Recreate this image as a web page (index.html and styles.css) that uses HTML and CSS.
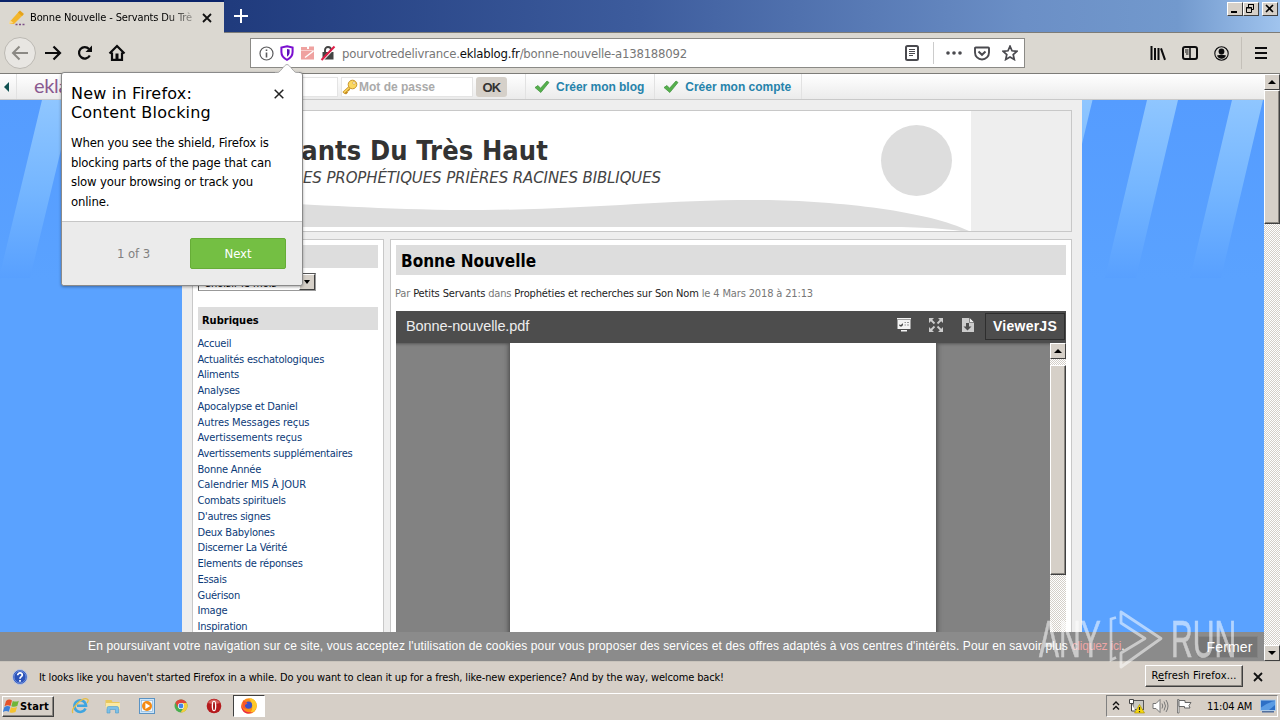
FILE: index.html
```html
<!DOCTYPE html>
<html lang="fr">
<head>
<meta charset="utf-8">
<title>Bonne Nouvelle - Servants Du Très Haut</title>
<link rel="stylesheet" href="styles.css">
</head>
<body>
<div class="screen">
  <header class="titlebar">
    <div class="tab">
      <svg class="tab-icon" width="18" height="18" viewBox="0 0 18 18"><path d="M2 12.500L11 2.500l4 3.500L6 15H2z" fill="#f3b62c"/><path d="M10 3.500l2-2 4 3.500-2 2z" fill="#e5a31c"/><path d="M1 15l1-4 3.500 3z" fill="#f9d98c"/><path d="M7.500 15.500h2M11 15.500h2M14.500 15.500h2" stroke="#7b4d86" stroke-width="1.600"/></svg>
      <span class="tab-text">Bonne Nouvelle - Servants Du Trè</span>
      <svg class="tab-close" width="10" height="10" viewBox="0 0 10 10"><path d="M1 1l8 8M9 1L1 9" stroke="#111" stroke-width="1.800"/></svg>
    </div>
    <svg class="plus" width="14" height="14" viewBox="0 0 14 14"><path d="M7 0v14M0 7h14" stroke="#fff" stroke-width="2"/></svg>
    <div class="win-buttons">
      <span class="wbtn"><svg width="13" height="11" viewBox="0 0 13 11"><path d="M3 9h6" stroke="#000" stroke-width="2"/></svg></span>
      <span class="wbtn"><svg width="13" height="11" viewBox="0 0 13 11"><path d="M4.500 4V1.500h5v5H8M4 1.500h6M2.500 4.500h5v5h-5zM2 5h6" fill="none" stroke="#000"/></svg></span>
      <span class="wbtn gap"><svg width="13" height="11" viewBox="0 0 13 11"><path d="M3 2l7 7M10 2L3 9" stroke="#000" stroke-width="1.600"/></svg></span>
    </div>
  </header>

  <nav class="navbar">
    <span class="back"><svg width="18" height="16" viewBox="0 0 18 16"><path d="M17 8H2M8.500 1.500L2 8l6.500 6.500" fill="none" stroke="#8b8984" stroke-width="2"/></svg></span>
    <svg class="fwd" width="18" height="16" viewBox="0 0 18 16"><path d="M1 8h15M9.500 1.500L16 8l-6.500 6.500" fill="none" stroke="#0c0c0d" stroke-width="2.200"/></svg>
    <svg class="reload" width="16" height="16" viewBox="0 0 16 16"><path d="M12.800 10.500A5.700 5.700 0 1 1 12 4" fill="none" stroke="#0c0c0d" stroke-width="2.200"/><path d="M15 0.500V7H8.500z" fill="#0c0c0d"/></svg>
    <svg class="home" width="18" height="18" viewBox="0 0 18 18"><path d="M1.500 9.500L9 2l7.500 7.500M4 8.500V15.800h10V8.500" fill="none" stroke="#0c0c0d" stroke-width="2.200"/><path d="M7.500 15V9.500h3V15z" fill="#0c0c0d"/></svg>
    <div class="urlbar">
      <svg class="i-info" width="15" height="15" viewBox="0 0 15 15"><circle cx="7.500" cy="7.500" r="6.500" fill="none" stroke="#5a5a5c" stroke-width="1.200"/><path d="M7.500 6.500v5M7.500 3.500v1.600" stroke="#5a5a5c" stroke-width="1.600"/></svg>
      <svg class="i-shield" width="14" height="16" viewBox="0 0 14 16"><path d="M7 1.200l5.600 1.300V7c0 3.700-2.200 6.200-5.600 7.800C3.600 13.200 1.400 10.700 1.400 7V2.500z" fill="#fff" stroke="#7a0fd0" stroke-width="2"/><path d="M7 4l2.600.6V7c0 2-.9 3.500-2.600 4.700z" fill="#5a12b8"/></svg>
      <svg class="i-img" width="16" height="14" viewBox="0 0 16 14"><path d="M1 3h13v10.500H1zM1 1h6v2H1zM9 0.500h5V3H9z" fill="#efa2a0"/><path d="M5 11.500L13.500 5" stroke="#fff" stroke-width="1.500"/><path d="M1 4.500h13" stroke="#f8d0ce"/></svg>
      <svg class="i-lock" width="16" height="16" viewBox="0 0 16 16"><path d="M5 7V5a3 3 0 0 1 6 0v2" fill="none" stroke="#444" stroke-width="1.900"/><path d="M2.500 7h11v7.500h-11z" fill="#444"/><path d="M3.200 15.200L15.200 2.500" stroke="#fff" stroke-width="1.200"/><path d="M1.500 15L14.500 1.500" stroke="#df1f48" stroke-width="2"/></svg>
      <span class="url">pourvotredelivrance.<b>eklablog.fr</b>/bonne-nouvelle-a138188092</span>
      <svg class="i-reader" width="14" height="16" viewBox="0 0 14 16"><rect x="1" y="1" width="12" height="14" rx="1.500" fill="none" stroke="#4a4a4f" stroke-width="2"/><path d="M4 4.500h6M4 6.500h6M4 8.500h6M4 10.500h4" stroke="#4a4a4f"/></svg>
      <span class="url-sep"></span>
      <svg class="i-dots" width="16" height="4" viewBox="0 0 16 4"><circle cx="2" cy="2" r="1.800" fill="#4a4a4f"/><circle cx="8" cy="2" r="1.800" fill="#4a4a4f"/><circle cx="14" cy="2" r="1.800" fill="#4a4a4f"/></svg>
      <svg class="i-pocket" width="16" height="15" viewBox="0 0 16 15"><path d="M1.800 1.500h12.400q.8 0 .8.800V6.500a7 7 0 0 1-14 0V2.300q0-.8.800-.8z" fill="none" stroke="#4a4a4f" stroke-width="1.900"/><path d="M4.500 5.500L8 8.800l3.500-3.300" fill="none" stroke="#4a4a4f" stroke-width="2"/></svg>
      <svg class="i-star" width="16" height="16" viewBox="0 0 16 16"><path d="M8 1.200l2 4.600 4.900.5-3.700 3.200 1.100 5L8 12l-4.300 2.500 1.100-5L1.100 6.300 6 5.800z" fill="none" stroke="#4a4a4f" stroke-width="1.700" stroke-linejoin="miter"/></svg>
    </div>
    <svg class="i-lib" width="16" height="15" viewBox="0 0 16 15"><path d="M1.500 0v14M5 2v12M8.500 2v12M11 2.300l4 11.500" stroke="#0c0c0d" stroke-width="2"/></svg>
    <svg class="i-side" width="16" height="14" viewBox="0 0 16 14"><rect x="1" y="1" width="14" height="12" rx="2" fill="none" stroke="#0c0c0d" stroke-width="2"/><path d="M8 1v12" stroke="#0c0c0d" stroke-width="1.500"/><path d="M3 4h3.500M3 6h3.500M4 8h2.500" stroke="#0c0c0d"/></svg>
    <svg class="i-acc" width="15" height="15" viewBox="0 0 15 15"><circle cx="7.500" cy="7.500" r="6.700" fill="none" stroke="#0c0c0d" stroke-width="1.100"/><circle cx="7.500" cy="5.500" r="2.900" fill="#0c0c0d"/><path d="M3 9.500q4.500-1.500 9 0-1.500 3.300-4.500 3.300T3 9.500z" fill="#0c0c0d"/></svg>
    <span class="nav-sep"></span>
    <svg class="i-menu" width="12" height="14" viewBox="0 0 12 14"><path d="M0 2h12M0 7h12M0 12h12" stroke="#0c0c0d" stroke-width="2"/></svg>
  </nav>

  <div class="viewport">
    <div class="page">
      <div class="ekla">
        <span class="ekla-arrow"></span>
        <span class="ekla-logo">eklablog</span>
        <span class="field login"></span>
        <span class="field pass"><svg width="16" height="16" viewBox="0 0 16 16"><path d="M8 8l-6.500 6M3 12.500l2 2M5.500 10l1.500 1.800" stroke="#c48a1c" stroke-width="3"/><path d="M8 8l-6 5.500" stroke="#fbd860" stroke-width="1.600"/><circle cx="10.500" cy="5.500" r="4.300" fill="#fbd860" stroke="#c9952a"/><circle cx="12" cy="4" r="1.300" fill="#fff" stroke="#c9952a" stroke-width=".6"/></svg>Mot de passe</span>
        <span class="ok">OK</span>
        <span class="ekla-link first"><svg width="16" height="14" viewBox="0 0 16 14"><path d="M1 7.500l3-2 2.500 2.800L13 1l2 1.500L6.800 12.500z" fill="#55b04c" stroke="#3c8f3a" stroke-width=".7"/></svg>Créer mon blog</span>
        <span class="ekla-link"><svg width="16" height="14" viewBox="0 0 16 14"><path d="M1 7.500l3-2 2.500 2.800L13 1l2 1.500L6.800 12.500z" fill="#55b04c" stroke="#3c8f3a" stroke-width=".7"/></svg>Créer mon compte</span>
      </div>
      <div class="body">
        <svg class="stripes" width="182" height="180" viewBox="0 0 182 180"><defs><linearGradient id="fade" x1="0" y1="0" x2="0" y2="1"><stop offset="0" stop-color="#8fc6ff"/><stop offset=".5" stop-color="#75b6ff"/><stop offset="1" stop-color="#58a0ff"/></linearGradient></defs><path d="M42 0h31L30 178H-1zM127 0h31L115 178H84z" fill="url(#fade)"/></svg>
        <div class="wrapper">
          <div class="banner">
            <svg class="banner-art" width="778" height="120" viewBox="0 0 778 120"><rect width="778" height="120" fill="#fff"/><circle cx="723.500" cy="49.500" r="35.500" fill="#ddd"/><path d="M0 88C110 92 180 99 290 99C400 98 470 89 560 89C640 89 735 100 776 120L768 120C740 116 710 116 660 116H0z" fill="#ddd"/></svg>
            <div class="banner-text">
              <div class="site-title">Servants Du Très Haut</div>
              <div class="site-sub">MESSAGES PROPHÉTIQUES PRIÈRES RACINES BIBLIQUES</div>
            </div>
          </div>
          <div class="columns">
            <aside class="side">
              <div class="side-title"></div>
              <div class="select"><span>Choisir le mois</span><i class="drop"></i></div>
              <div class="side-title second">Rubriques</div>
              <ul class="cats">
                <li>Accueil</li><li>Actualités eschatologiques</li><li>Aliments</li><li>Analyses</li><li>Apocalypse et Daniel</li><li class="wide">Autres Messages reçus</li><li class="wide">Avertissements reçus</li><li>Avertissements supplémentaires</li><li>Bonne Année</li><li class="wide">Calendrier MIS À JOUR</li><li>Combats spirituels</li><li>D'autres signes</li><li>Deux Babylones</li><li>Discerner La Vérité</li><li>Elements de réponses</li><li>Essais</li><li>Guérison</li><li>Image</li><li>Inspiration</li>
              </ul>
            </aside>
            <main class="main">
              <h1 class="post-title">Bonne Nouvelle</h1>
              <p class="meta">Par <b>Petits Servants</b> dans <b>Prophéties et recherches sur Son Nom</b> le 4 Mars 2018 à 21:13</p>
              <div class="viewer">
                <div class="viewer-bar">
                  <span class="file">Bonne-nouvelle.pdf</span>
                  <svg class="v1" width="16" height="16" viewBox="0 0 16 16"><path d="M1 1h14v1.500H1zM1.500 3h13v9h-13zM5 13h6v1.500H5z" fill="#f4f4f4"/><path d="M3 7.500a2 2 0 1 0 3.500-1.300L5 8z" fill="#4a4a4a"/><path d="M8.500 5.500h1.500M11 5.500h2M8.500 8h1.500M11 8h2" stroke="#999"/></svg>
                  <svg class="v2" width="16" height="16" viewBox="0 0 16 16"><path d="M1 1h5L1 6zM15 1v5l-5-5zM1 15v-5l5 5zM15 15h-5l5-5z" fill="#ccc"/><path d="M2 2l4.500 4.500M14 2L9.500 6.500M2 14l4.500-4.500M14 14L9.500 9.500" stroke="#ccc" stroke-width="1.800"/></svg>
                  <svg class="v3" width="14" height="16" viewBox="0 0 14 16"><path d="M1 1h7l5 5v9H1z" fill="#ccc"/><path d="M8.500 0.500l5 5h-5z" fill="#eee" stroke="#4d4d4d" stroke-width=".6"/><path d="M5 6h3v3.500h2.500l-4 4-4-4H5z" fill="#4d4d4d"/></svg>
                  <span class="vjs">ViewerJS</span>
                </div>
                <div class="viewer-body">
                  <div class="sheet"></div>
                  <div class="scroll inner"><span class="sbtn up"></span><span class="thumb"></span></div>
                </div>
              </div>
            </main>
          </div>
        </div>
        <svg class="stripes" width="182" height="180" viewBox="0 0 182 180"><path d="M-20 0h30.500L-32 178H-63zM65 0h31L54 178H23zM150 0h31L139 178H108z" fill="url(#fade)"/></svg>
      </div>
    </div>
    <div class="scroll outer"><span class="sbtn up"></span><span class="thumb"></span><span class="grow"></span><span class="sbtn down"></span></div>
    <div class="cookie"><span class="cookie-text">En poursuivant votre navigation sur ce site, vous acceptez l'utilisation de cookies pour vous proposer des services et des offres adaptés à vos centres d'intérêts. Pour en savoir plus <em>cliquez ici</em>.</span><span class="fermer">Fermer</span></div>
  </div>

  <div class="notice">
    <svg width="16" height="16" viewBox="0 0 16 16"><circle cx="8" cy="8" r="7.400" fill="#2b52b8" stroke="#c3cde4"/><circle cx="8" cy="8" r="6" fill="none" stroke="#7d9de6" stroke-width=".8"/><path d="M5.700 6.300c0-3.200 4.800-3 4.600-.2C10.200 7.700 8 7.700 8 9.700M8 11v1.800" fill="none" stroke="#fff" stroke-width="1.700"/></svg>
    <span class="notice-text">It looks like you haven't started Firefox in a while. Do you want to clean it up for a fresh, like-new experience? And by the way, welcome back!</span>
    <span class="refresh">R<u>e</u>fresh Firefox...</span>
    <svg class="n-close" width="10" height="10" viewBox="0 0 10 10"><path d="M1 1l8 8M9 1L1 9" stroke="#111" stroke-width="1.800"/></svg>
  </div>

  <footer class="taskbar">
    <span class="start"><svg width="17" height="16" viewBox="0 0 17 16"><path d="M3 3q3-2.500 6-.5L7.500 8q-3-1.800-6 .3z" fill="#e5532a"/><path d="M9.800 3q3 1.300 6-.3L14.300 8q-3 1.500-6 .3z" fill="#6fb53a"/><path d="M1.300 9.200q3-2 6-.4l-1.500 5q-3-1.500-6 .3z" fill="#3d7fd8"/><path d="M8 9.200q3 1.300 6-.2l-1.500 5q-3 1.500-6 .2z" fill="#f5c22e"/></svg>Start</span>
    <svg class="q" width="18" height="18" viewBox="0 0 18 18"><path d="M14.500 11.500A5.800 5.800 0 1 1 15 8.800H6" fill="none" stroke="#3fa5e0" stroke-width="2.600"/><path d="M2 16C-1 12 12-1 16.500 2.300c1 .8.300 2.700-.5 3.700" fill="none" stroke="#e6bd45" stroke-width="1.300"/></svg>
    <svg class="q" width="18" height="18" viewBox="0 0 18 18"><path d="M1.500 3h6l1 2h7v4h-14z" fill="#e9c85c"/><path d="M2 6h14v6H2z" fill="#fbe9a3"/><path d="M3 16v-5q0-1.500 1.500-1.500h8.500q1.500 0 1.500 1.500v5h-3v-3.500H6V16z" fill="#7cc0e8" stroke="#4f9cc9" stroke-width=".6"/></svg>
    <svg class="q" width="18" height="18" viewBox="0 0 18 18"><rect x="1.500" y="1.500" width="15" height="15" fill="#cfe5f7" stroke="#5a93c4"/><rect x="3.500" y="3.500" width="11" height="11" fill="#f3f9fe" stroke="#8bb7dc" stroke-width=".7"/><circle cx="9" cy="9" r="5" fill="#f48a13"/><path d="M7.400 6v6l4.800-3z" fill="#fff"/></svg>
    <svg class="q" width="16" height="16" viewBox="0 0 16 16"><circle cx="8" cy="8" r="6.500" fill="#4aae4f"/><path d="M2.400 4.700A6.500 6.500 0 0 1 13.700 4.900H8L5 9.500z" fill="#e0443a"/><path d="M13.700 4.900A6.500 6.500 0 0 1 7.600 14.500L10.800 9.500 9.500 4.900z" fill="#f6cd3c"/><circle cx="8" cy="8" r="3.100" fill="#fff"/><circle cx="8" cy="8" r="2.400" fill="#4484e8"/></svg>
    <svg class="q" width="16" height="16" viewBox="0 0 16 16"><circle cx="8" cy="8" r="7.300" fill="#b51a1d"/><path d="M2 5a7 7 0 0 1 12 0q-6 2-12 0z" fill="#d9605c"/><ellipse cx="8" cy="8" rx="2.300" ry="5.300" fill="#fff"/><ellipse cx="8" cy="8" rx="1" ry="4.300" fill="#a61417"/></svg>
    <span class="active-app"><svg width="18" height="18" viewBox="0 0 18 18"><circle cx="9" cy="9" r="7.800" fill="#ff8b16"/><path d="M9 1.200a7.800 7.800 0 0 1 7.500 5c1 5-2 10-8 10.300C14 14 13 7 9 1.200z" fill="#ffc928"/><path d="M1.300 7C2 14 8 17 13.500 14.500 9 18.800 .5 16 1.300 7z" fill="#e8264c"/><circle cx="8.500" cy="8.200" r="3.600" fill="#3c53c8"/><path d="M3 3.500q3 .5 4.500 3L5 8q-1 2 2 3.500-4 1-4.500-3z" fill="#f9552c"/></svg></span>
    <div class="tray">
      <svg class="t1" width="8" height="10" viewBox="0 0 8 10"><path d="M1 4l3-3 3 3M1 8.500l3-3 3 3" fill="none" stroke="#111" stroke-width="1.400"/></svg>
      <svg class="t2" width="17" height="16" viewBox="0 0 17 16"><rect x="5" y="2.500" width="10.500" height="9" fill="#c9c9c3" stroke="#555"/><path d="M1.500 1.500h4v4h-4zM3.500 5.500V13h4" fill="#fff" stroke="#444"/><path d="M11.500 6.500l5 8.500h-10z" fill="#f7d90f" stroke="#a58c00" stroke-width=".6"/><path d="M11.500 9v3M11.500 13v1.200" stroke="#222" stroke-width="1.200"/></svg>
      <svg class="t3" width="17" height="16" viewBox="0 0 17 16"><path d="M1 5.500h3L8 1.500v13L4 10.500H1z" fill="#fff" stroke="#777"/><path d="M10 5.500q1.500 2.500 0 5M12 3.500q3 4.500 0 9M14 2q4 6 0 12" fill="none" stroke="#777"/></svg>
      <svg class="t4" width="17" height="16" viewBox="0 0 17 16"><path d="M1.500 15V1.500H3V15z" fill="#fff" stroke="#666" stroke-width=".8"/><path d="M3 2.500h6v2h6l-2 3 1 2.500H8.500V8.500H3z" fill="#fff" stroke="#666"/></svg>
      <span class="clock">11:04 AM</span>
      <svg width="16" height="14" viewBox="0 0 16 14"><rect x=".5" y="1" width="15" height="10.500" fill="#2d6fc6" stroke="#aecbe8"/><path d="M1 8.500Q8 3 15 2v4L9 11H1z" fill="#5b9ce4"/><path d="M2 12.800h12" stroke="#3a5f97" stroke-width="1.300"/></svg>
    </div>
  </footer>

  <section class="popup">
    <svg class="notch" width="24" height="11" viewBox="0 0 24 11"><path d="M1 10.500C5 10.500 9 1.500 12 1.500S19 10.500 23 10.500V11H1z" fill="#fff" stroke="#999" stroke-width=".8"/><path d="M0 10.500h24" stroke="#fff" stroke-width="1.500"/></svg>
    <div class="popup-body">
      <div class="popup-head"><h2>New in Firefox:<br>Content Blocking</h2><svg width="10" height="10" viewBox="0 0 10 10"><path d="M.7.700l8.600 8.600M9.300.700L.7 9.300" stroke="#222" stroke-width="1.500"/></svg></div>
      <p>When you see the shield, Firefox is<br>blocking parts of the page that can<br>slow your browsing or track you<br>online.</p>
    </div>
    <div class="popup-foot"><span class="step">1 of 3</span><span class="next">Next</span></div>
  </section>

  <div class="mark"><span>ANY</span><svg width="56" height="62" viewBox="0 0 56 62"><path d="M13 3L53 29.500 13 58V44L37 29.500 13 14z" fill="rgba(255,255,255,.08)" stroke="#fff" stroke-width="2.800" stroke-linejoin="round"/><path d="M8 8.500L3 10v41l5-2.500" fill="none" stroke="#fff" stroke-width="2.600"/></svg><span>RUN</span></div>
</div>
</body>
</html>
```
FILE: styles.css
```css
* { box-sizing: border-box; }
body { margin: 0; font-family: "DejaVu Sans Condensed", "DejaVu Sans", sans-serif; font-size: 11px; color: #000; }
svg { display: block; flex: none; overflow: hidden; }
.screen { position: relative; width: 1280px; height: 720px; overflow: hidden; display: flex; flex-direction: column; background: #d6cfc7; }

.titlebar { height: 33px; display: flex; align-items: flex-start; background: linear-gradient(90deg, #0a246a 0, #1f3a7c 17%, #3d5c9d 50%, #6b8fc6 80%, #7299cd 92%, #a0c4ee 100%); border-bottom: 1px solid #7d7c78; }
.tab { width: 224px; height: 33px; margin-right: 10px; padding: 0 12px 0 8px; border-top: 2px solid #0a246a; background: #dbd8d1; display: flex; align-items: center; }
.tab-icon { margin-right: 4px; }
.tab-text { width: 163px; white-space: nowrap; letter-spacing: -.123px; -webkit-mask-image: linear-gradient(90deg, #000 83%, rgba(0,0,0,.3)); mask-image: linear-gradient(90deg, #000 83%, rgba(0,0,0,.3)); }
.tab-close { margin: 0 0 0 9px; }
.plus { margin-top: 9px; }
.win-buttons { margin: 2px 2px 0 auto; width: 51px; flex: none; display: flex; }
.wbtn { width: 16px; height: 14px; flex: none; background: #d6d0c8; border: 1px solid; border-color: #fff #404040 #404040 #fff; }
.wbtn.gap { margin-left: 3px; }

.navbar { height: 41px; background: #dbd8d1; border-bottom: 1px solid #7d7c78; display: flex; align-items: center; padding-left: 4px; flex: none; }
.back { width: 32px; height: 32px; border-radius: 50%; border: 1px solid #bcb9b3; background: #e8e6e2; display: flex; align-items: center; justify-content: center; }
.fwd { margin-left: 8px; }
.reload { margin-left: 15px; }
.home { margin-left: 15px; }
.urlbar { width: 775px; height: 30px; margin-left: 124px; background: #fff; border: 1px solid #8b8a86; display: flex; align-items: center; padding-left: 8px; flex: none; }
.i-shield { margin-left: 6px; }
.i-img { margin-left: 6px; }
.i-lock { margin-left: 4px; }
.url { margin-left: 6px; width: 563px; font-size: 13px; letter-spacing: -.213px; color: #777; white-space: nowrap; }
.url b { font-weight: normal; color: #0c0c0d; }
.url-sep { width: 1px; height: 22px; margin-left: 14px; background: #ccc; }
.i-dots { margin-left: 12px; }
.i-pocket { margin-left: 12px; }
.i-star { margin-left: 12px; }
.i-lib { margin-left: 125px; }
.i-side { margin-left: 16px; }
.i-acc { margin-left: 16px; }
.nav-sep { width: 1px; height: 32px; margin-left: 12px; background: #c4c0b9; }
.i-menu { margin-left: 13px; }

.viewport { position: relative; height: 587px; flex: none; display: flex; overflow: hidden; }
.page { width: 1264px; height: 587px; overflow: hidden; }
.ekla { height: 26px; display: flex; align-items: center; background: linear-gradient(#fff, #ebebeb); border-bottom: 1px solid #c9c9c9; font: bold 12px "Liberation Sans", sans-serif; }
.ekla-arrow { width: 17px; height: 25px; border-right: 1px solid #e2e2e2; display: flex; align-items: center; padding-left: 4px; }
.ekla-arrow::before { content: ""; border: 5px solid transparent; border-left: 0; border-right: 5px solid #115252; }
.ekla-logo { margin-left: 17px; width: 90px; font: 20px Lato, sans-serif; letter-spacing: -.3px; color: #8a5a90; margin-top: -3px; }
.field { height: 20px; background: #fff; border: 1px solid #e4e4e4; }
.login { width: 130px; margin-left: 84px; }
.pass { width: 132px; margin-left: 3px; color: #aaa; display: flex; align-items: center; gap: 1px; white-space: nowrap; }
.ok { width: 31px; height: 20px; margin-left: 3px; border-radius: 3px; background: #d5d0c9; color: #333; font-size: 13px; line-height: 21px; text-align: center; letter-spacing: -.8px; }
.ekla-link { height: 25px; padding: 0 10px 0 7px; display: flex; align-items: center; gap: 6px; color: #2683ab; border-right: 1px solid #e2e2e2; white-space: nowrap; }
.ekla-link.first { margin-left: 18px; padding-left: 8px; border-left: 1px solid #e2e2e2; letter-spacing: -.03px; }
.ekla-link + .ekla-link { padding-left: 8px; }
.body { height: 561px; display: flex; background: linear-gradient(#559cff, #5aa2ff 180px); }
.wrapper { width: 900px; background: #eee; padding: 10px 10px 0; flex: none; }
.banner { position: relative; height: 122px; border: 1px solid #c8c8c8; }
.banner-text { position: absolute; left: 0; top: 0; color: #333; white-space: nowrap; }
.site-title { width: 355px; padding-top: 24px; text-align: right; font-weight: bold; font-size: 27px; line-height: 32px; letter-spacing: .122px; }
.site-sub { width: 468px; display: flex; justify-content: flex-end; font: italic 15px/22px "DejaVu Sans", sans-serif; letter-spacing: -.114px; color: #444; }
.columns { display: flex; gap: 6px; margin-top: 7px; height: 430px; }
.side { width: 192px; background: #fff; border: 1px solid #c8c8c8; padding: 5px; }
.side-title { height: 23px; background: #ddd; font-weight: bold; line-height: 27px; padding-left: 4px; }
.side-title.second { margin-top: 16px; }
.select { width: 118px; height: 18px; margin-top: 5px; border: 1px solid; border-color: #555 #999 #999 #555; display: flex; justify-content: space-between; padding-left: 5px; line-height: 19px; }
.drop { width: 16px; height: 16px; background: #d6d0c8; border: 1px solid; border-color: #fff #404040 #404040 #fff; display: flex; align-items: center; justify-content: center; }
.drop::before { content: ""; border: 3.500px solid transparent; border-top: 4px solid #000; border-bottom: 0; }
.cats { list-style: none; margin: 6px 0 0 -.5px; padding: 0; color: #0b3a78; letter-spacing: -.232px; line-height: 15.720px; }
.wide { letter-spacing: -.08px; }
.main { width: 682px; background: #fff; border: 1px solid #c8c8c8; padding: 5px; }
.post-title { margin: 0; height: 30px; background: #ddd; font-size: 17px; line-height: 32px; padding-left: 5px; }
.meta { margin: 11px 0 0 -1px; line-height: 16px; letter-spacing: -.144px; color: #777; white-space: nowrap; }
.meta b { font-weight: normal; color: #222; }
.viewer { margin-top: 9px; }
.viewer-bar { height: 32px; background: #4d4d4d; display: flex; align-items: center; padding-left: 10px; }
.file { width: 490px; font: 14.500px/16px "Liberation Sans", sans-serif; margin-top: -2px; letter-spacing: -.1px; color: #eee; }
.v1, .v2 { margin-right: 16px; margin-top: -4px; }
.v3 { margin-left: 1px; margin-right: 10px; margin-top: -4px; }
.vjs { width: 80px; height: 27px; margin-top: -2px; border: 1px solid #2e2e2e; font: bold 14px/25px "Liberation Sans", sans-serif; letter-spacing: .25px; color: #fff; text-align: center; }
.viewer-body { height: 350px; background: #828282; display: flex; box-shadow: inset 0 3px 3px -2px #555; }
.sheet { width: 426px; margin-left: 114px; background: #fff; box-shadow: 0 0 5px 1px #444; clip-path: inset(0 -8px); }
.scroll { width: 16px; display: flex; flex-direction: column; background: repeating-conic-gradient(#d4cfc8 0 25%, #fff 0 50%) 0 0 / 2px 2px; }
.inner { margin-left: auto; }
.sbtn { height: 16px; flex: none; background: #d6d0c8; border: 1px solid; border-color: #fff #404040 #404040 #fff; display: flex; align-items: center; justify-content: center; }
.sbtn::before { content: ""; border: 4px solid transparent; }
.up::before { border-top: 0; border-bottom-color: #000; }
.down::before { border-bottom: 0; border-top-color: #000; }
.thumb { background: #d6d0c8; border: 1px solid; border-color: #fff #404040 #404040 #fff; box-shadow: inset -1px -1px #8a8680; flex: none; }
.inner .thumb { height: 210px; margin-top: 6px; }
.outer .thumb { height: 134px; }
.grow { flex: 1; }
.cookie { position: absolute; left: 0; bottom: 0; width: 1264px; height: 29px; background: #8b8b8b; color: #fff; display: flex; align-items: center; padding-left: 88px; font: 12px "Liberation Sans", sans-serif; }
.cookie-text { white-space: nowrap; letter-spacing: .13px; width: 1110px; padding-bottom: 2px; }
.cookie em { font-style: normal; color: #eda6a6; letter-spacing: -.2px; }
.fermer { width: 60px; height: 22px; background: #767676; border: 1px solid #838383; font-size: 14px; line-height: 20px; letter-spacing: .146px; text-align: center; padding-left: 3px; }

.notice { height: 33px; flex: none; display: flex; align-items: center; padding: 0 0 2px 12px; border-top: 1px solid #c9c4bc; }
.notice-text { margin-left: 11px; width: 1106px; letter-spacing: -.139px; white-space: nowrap; }
.refresh { width: 98px; height: 22px; margin-top: -2px; background: #d6d0c8; border: 1px solid; border-color: #fff #404040 #404040 #fff; box-shadow: inset -1px -1px #8a8680; text-align: center; line-height: 20px; letter-spacing: .14px; white-space: nowrap; }
.n-close { margin-left: 10px; }
.taskbar { height: 27px; flex: none; border-top: 1px solid #fff; display: flex; align-items: center; padding: 0 0 2px 2px; margin-top: -1px; }
.start { width: 52px; height: 21px; margin-right: 8px; border: 1px solid; border-color: #fff #404040 #404040 #fff; box-shadow: inset -1px -1px #8a8680; display: flex; align-items: center; font-weight: bold; letter-spacing: .169px; }
.q { width: 18px; margin: 0 0 0 8.500px; }
.q + .q { margin-left: 15.700px; }
.active-app { width: 32px; height: 22px; margin-left: 10px; background: #fff; border: 1px solid; border-color: #404040 #fff #fff #404040; display: flex; justify-content: center; align-items: center; }
.tray { width: 172px; height: 22px; margin: 0 2px 0 auto; border: 1px solid; border-color: #808080 #fff #fff #808080; display: flex; align-items: center; padding-left: 5px; }
.t2 { margin-left: 8px; }
.t3 { margin-left: 7px; }
.t4 { margin-left: 7px; }
.clock { margin: 0 8px 0 14px; letter-spacing: -.246px; white-space: nowrap; }

.popup { position: absolute; left: 61px; top: 72px; width: 242px; height: 214px; border: 1px solid #8a8a8a; border-radius: 3px; background: #fff; box-shadow: 0 1px 3px rgba(0,0,0,.35); }
.notch { position: absolute; left: 213px; top: -10px; }
.popup-body { height: 149px; padding: 11px 9px 0; border-bottom: 1px solid #c6c6c6; }
.popup-head { display: flex; justify-content: space-between; }
.popup-head svg { margin: 5px 9px 0 0; }
.popup h2 { margin: 0; font-family: "DejaVu Sans", sans-serif; font-size: 16px; font-weight: normal; line-height: 19px; letter-spacing: .2px; white-space: nowrap; }
.popup p { margin: 11px 0 0; font-size: 13px; line-height: 19.700px; letter-spacing: -.16px; white-space: nowrap; }
.popup-foot { height: 63px; background: #ebebeb; border-radius: 0 0 3px 3px; display: flex; align-items: center; font-size: 13px; letter-spacing: -.1px; }
.step { width: 73px; margin-left: 55px; color: #808080; }
.next { width: 96px; height: 31px; border: 1px solid #66ad37; border-radius: 2px; background: #74bf43; color: #fff; text-align: center; line-height: 30px; }

.mark { position: absolute; left: 1039px; top: 609px; display: flex; align-items: center; opacity: .55; color: #fff; font: 51px/62px "Liberation Sans", sans-serif; }
.mark svg { margin: 0 7px 0 8px; }
.mark span { width: 61px; transform: scaleX(.59); transform-origin: 0 50%; white-space: nowrap; -webkit-text-stroke: .6px #fff; }
```
